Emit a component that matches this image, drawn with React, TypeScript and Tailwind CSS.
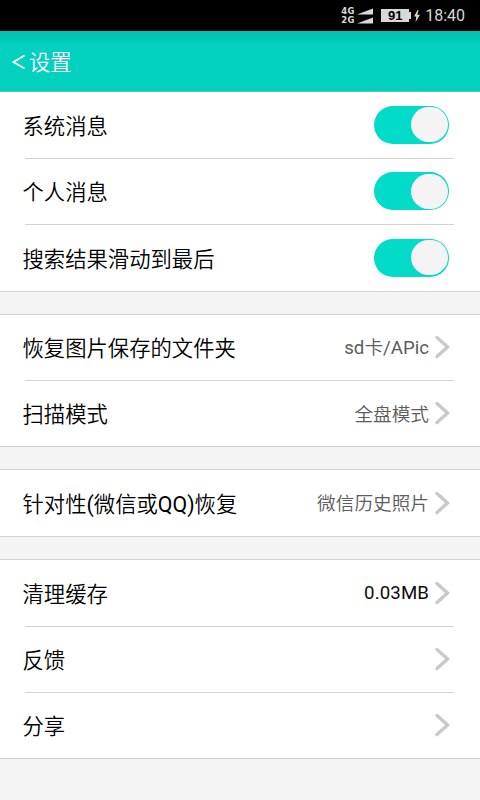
import React, { useState } from "react";

interface IRow {
  label: string;
  height: string;
  value?: string;
  valueClass?: string;
  toggle?: boolean;
}

const groups: IRow[][] = [
  [
    { label: "系统消息", height: "h-[67px]", toggle: true },
    { label: "个人消息", height: "h-[66px]", toggle: true },
    { label: "搜索结果滑动到最后", height: "h-[66px]", toggle: true },
  ],
  [
    { label: "恢复图片保存的文件夹", height: "h-[66px]", value: "sd卡/APic", valueClass: "text-[#5c5c5c]" },
    { label: "扫描模式", height: "h-[65px]", value: "全盘模式", valueClass: "text-[#5c5c5c] pt-[2px]" },
  ],
  [{ label: "针对性(微信或QQ)恢复", height: "h-[66px]", value: "微信历史照片", valueClass: "text-[#5c5c5c] pt-[2px]" }],
  [
    { label: "清理缓存", height: "h-[67px]", value: "0.03MB", valueClass: "text-[#0c0c0c] tracking-[0.1px]" },
    { label: "反馈", height: "h-[66px]" },
    { label: "分享", height: "h-[65px]" },
  ],
];

// chinese glyphs are set a bit lighter than the latin ones
const MixedText: React.FC<{ text: string }> = ({ text }) => (
  <>
    {text.split(/([\x20-\x7e]+)/).map((part, i) => (
      <span key={i} className={i % 2 === 1 ? "font-normal" : "font-[350]"}>
        {part}
      </span>
    ))}
  </>
);

const StatusBar: React.FC = () => (
  <div className="h-[31px] bg-black flex items-center justify-end pr-[15px] text-[#d8d8d8]">
    {/* network type for both sim cards */}
    <div className="flex flex-col w-[14px] mr-[2px] mt-px font-['DejaVu_Sans'] font-bold text-[8.5px] leading-[9px] tracking-[0.5px]">
      <span>4G</span>
      <span>2G</span>
    </div>
    <svg width="17" height="16" viewBox="0 0 17 16" className="mr-[7px]" fill="currentColor">
      <path d="M0 6.5L16 0.5V6.5Z" />
      <path d="M0 15.5L16 9.5V15.5Z" />
    </svg>
    <div className="w-[28px] h-[13px] bg-[#d8d8d8] text-black font-['Liberation_Sans'] text-[13px] leading-[13px] font-bold text-center">
      91
    </div>
    <div className="w-[2px] h-[7px] bg-[#d8d8d8] mr-[3px]" />
    <svg width="6" height="12" viewBox="0 0 6 12" className="mr-[5px]" fill="currentColor">
      <path d="M3.6 0L0 6.6H2.2L1.6 12L6 4.8H3.3L4.6 0Z" />
    </svg>
    <span className="text-[16px] leading-5">18:40</span>
  </div>
);

const Toggle: React.FC = () => {
  const [on, setOn] = useState(true);

  return (
    <button
      type="button"
      role="switch"
      aria-checked={on}
      onClick={() => setOn(!on)}
      className={`w-[75.5px] h-[38px] rounded-full flex items-center px-[1.5px] mr-[5px] -mt-px ${
        on ? "bg-[#02dbc7] justify-end" : "bg-[#cccccc] justify-start"
      }`}
    >
      <span className="w-[37px] h-[35px] rounded-full bg-[#f4f4f4]" />
    </button>
  );
};

const Chevron: React.FC = () => (
  <svg
    width="16"
    height="24"
    viewBox="0 0 16 24"
    className="ml-[6px] mr-[3px] -mt-px"
    fill="none"
    stroke="#c9c9c9"
    strokeWidth="3.4"
    strokeLinecap="round"
  >
    <path d="M2 2.5L12.5 12L2 21.5" />
  </svg>
);

const App: React.FC = () => {
  return (
    <div className="w-[480px] h-[800px] overflow-hidden bg-[#f4f4f4] font-[Roboto,'Noto_Sans_CJK_SC',sans-serif]">
      <StatusBar />
      <header className="h-[61px] flex items-center pl-[12px] text-white bg-linear-to-b from-[#04bfae] to-[#02d1c0] to-25% border-b border-[#5fc4ba]">
        <svg width="13" height="14" viewBox="0 0 13 14" className="mr-[4px] mt-[2px]" fill="none" stroke="currentColor" strokeWidth="1.8">
          <path d="M12.5 0.5L1.5 7L12.5 13.5" />
        </svg>
        <h1 className="text-[21.33px] leading-7 pt-[3px] font-[350]">设置</h1>
      </header>
      <main className="flex flex-col gap-[22px]">
        {groups.map((rows, i) => (
          <section key={i} className={`bg-white border-b border-[#d2d2d2] ${i > 0 ? "border-t" : ""}`}>
            {rows.map((row, j) => (
              <div
                key={row.label}
                className={`${row.height} ml-[25px] mr-[26px] flex items-center ${
                  j < rows.length - 1 ? "border-b border-[#d2d2d2]" : ""
                }`}
              >
                <span className="-ml-[2.5px] pt-[3px] flex-1 text-[21.33px] leading-7 text-black">
                  <MixedText text={row.label} />
                </span>
                {row.value && (
                  <span className={`text-[18.67px] leading-6 ${row.valueClass}`}>
                    <MixedText text={row.value} />
                  </span>
                )}
                {row.toggle ? <Toggle /> : <Chevron />}
              </div>
            ))}
          </section>
        ))}
      </main>
    </div>
  );
};

export default App;
